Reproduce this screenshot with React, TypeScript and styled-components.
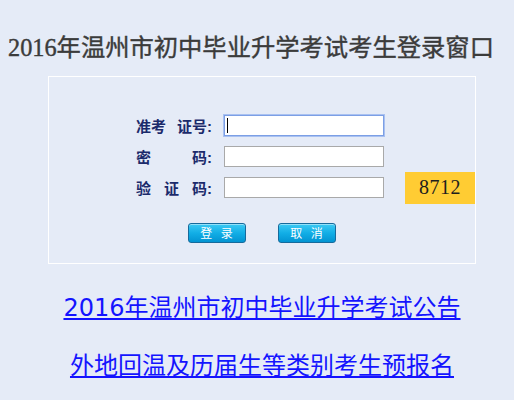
import React from 'react';
import styled, {createGlobalStyle} from 'styled-components';

const GlobalStyle = createGlobalStyle`
  html, body {
    margin: 0;
    padding: 0;
    background: #e5ebf7;
  }
  body {
    font-family: "Liberation Serif", "Noto Sans CJK SC", serif;
  }
`;

const Page = styled.div`
  width: 514px;
  height: 400px;
  overflow: hidden;
`;

const Title = styled.h1`
  margin: 0;
  padding: 33px 0 0 8px;
  height: 30px;
  line-height: 30px;
  font-size: 24.3px;
  font-weight: normal;
  -webkit-text-stroke: 0.4px #3b3b3b;
  color: #3b3b3b;
  white-space: nowrap;
  font-family: "Liberation Serif", "Noto Sans CJK SC", serif;
`;

const Main = styled.div`
  padding-left: 10px;
  display: flex;
  flex-direction: column;
  align-items: center;
`;

const LoginBox = styled.div`
  margin-top: 13px;
  width: 428px;
  box-sizing: border-box;
  border: 1px solid #ffffff;
  padding: 38px 0 20px 87px;
  display: flex;
  flex-direction: column;
  gap: 10px;
`;

const Row = styled.div`
  height: 21px;
  display: flex;
  align-items: center;
`;

const Label = styled.label`
  width: 76px;
  margin-right: 12px;
  display: flex;
  justify-content: space-between;
  font-family: "Liberation Sans", "Noto Sans CJK SC", sans-serif;
  font-size: 15px;
  font-weight: bold;
  color: #1b2a6b;
  white-space: nowrap;
`;

const FieldWrap = styled.span`
  position: relative;
  display: block;
  width: 160px;
  height: 21px;
`;

const Field = styled.input<{focused?: boolean}>`
  display: block;
  width: 160px;
  height: 21px;
  box-sizing: border-box;
  margin: 0;
  padding: 0 3px;
  background: #ffffff;
  border: 1px solid ${p => p.focused ? '#7c9fe5' : '#a9a9a9'};
  box-shadow: ${p => p.focused ? '0 0 0 1px #a9c1f1' : 'none'};
  outline: none;
  font-size: 14px;
`;

const Caret = styled.span`
  position: absolute;
  left: 3px;
  top: 3px;
  width: 1px;
  height: 15px;
  background: #000000;
`;

const Captcha = styled.div`
  margin-left: 21px;
  width: 70px;
  height: 32px;
  flex-shrink: 0;
  background: #ffcc33;
  display: flex;
  align-items: center;
  justify-content: center;
  font-family: "Liberation Serif", serif;
  font-size: 20px;
  letter-spacing: 0.5px;
  color: #1e1e1e;
`;

const Buttons = styled.div`
  margin-top: 15px;
  margin-left: -87px;
  display: flex;
  justify-content: center;
  gap: 32px;
`;

const Button = styled.button`
  width: 58px;
  height: 20px;
  box-sizing: border-box;
  padding: 0 0 0 2px;
  border: 1px solid #166a9c;
  border-radius: 3px;
  background: linear-gradient(#3ccaf4 0%, #12aee6 50%, #0294d2 100%);
  box-shadow: inset 0 1px 0 rgba(255, 255, 255, 0.45);
  color: #ffffff;
  font-family: "Noto Sans CJK SC", sans-serif;
  font-size: 12px;
  line-height: 18px;
  letter-spacing: 3px;
  cursor: pointer;
`;

const Links = styled.div`
  margin-top: 29px;
  display: flex;
  flex-direction: column;
  align-items: center;
  gap: 28px;
`;

const NoticeLink = styled.a`
  display: block;
  height: 30px;
  line-height: 30px;
  font-family: "DejaVu Sans", "Noto Sans CJK SC", sans-serif;
  font-size: 24px;
  color: #1414ff;
  text-decoration: underline;
  white-space: nowrap;
`;

export default function App() {
    return (
        <Page>
            <GlobalStyle/>
            <Title>2016年温州市初中毕业升学考试考生登录窗口</Title>
            <Main>
                <LoginBox>
                    <Row>
                        <Label><span>准考</span><span>证号:</span></Label>
                        <FieldWrap>
                            <Field focused type="text"/>
                            <Caret/>
                        </FieldWrap>
                    </Row>
                    <Row>
                        <Label><span>密</span><span>码:</span></Label>
                        <FieldWrap>
                            <Field type="password"/>
                        </FieldWrap>
                    </Row>
                    <Row>
                        <Label><span>验</span><span>证</span><span>码:</span></Label>
                        <FieldWrap>
                            <Field type="text"/>
                        </FieldWrap>
                        <Captcha>8712</Captcha>
                    </Row>
                    <Buttons>
                        <Button>登 录</Button>
                        <Button>取 消</Button>
                    </Buttons>
                </LoginBox>
                <Links>
                    <NoticeLink href="#">2016年温州市初中毕业升学考试公告</NoticeLink>
                    <NoticeLink href="#">外地回温及历届生等类别考生预报名</NoticeLink>
                </Links>
            </Main>
        </Page>
    );
}
